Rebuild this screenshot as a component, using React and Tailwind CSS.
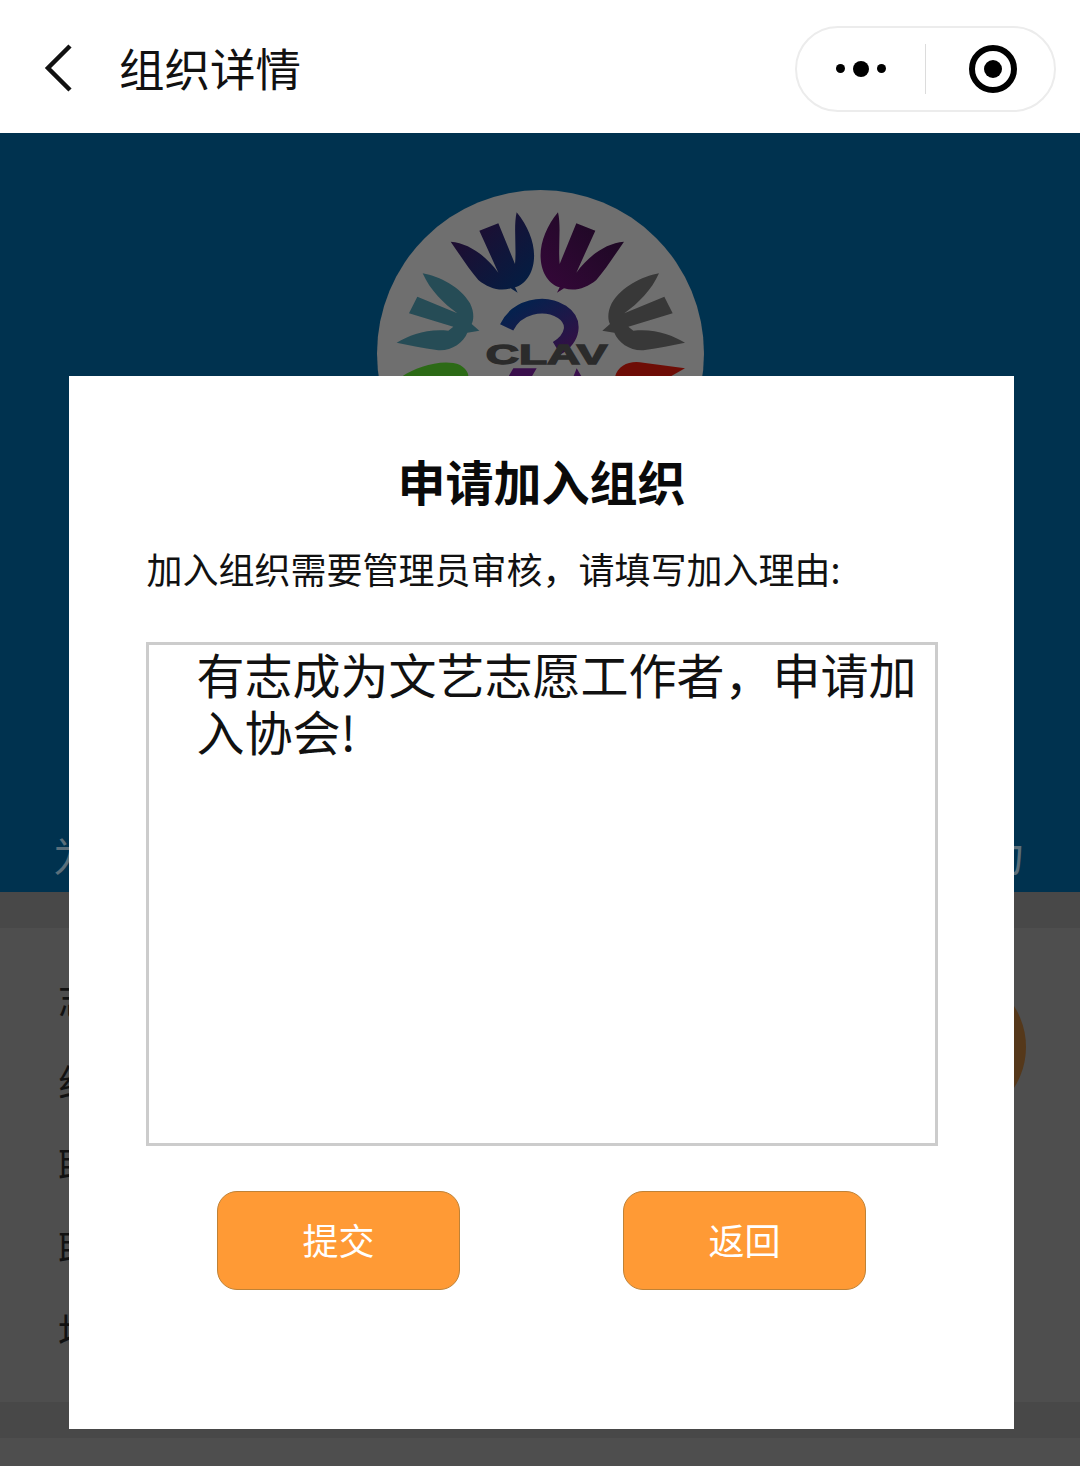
const font = "font-['Noto_Sans_CJK_SC','Noto_Sans',sans-serif]";

function Logo() {
  const bird =
    "M272 185 C330 190 380 230 415 278 L358 152 L415 130 L465 252 C470 200 460 140 470 97 C505 140 525 190 522 235 C520 280 495 315 465 322 L473 338 L452 325 C420 335 385 325 355 300 C325 265 300 225 272 185Z";
  const sideBird =
    "M188 280 C240 290 300 320 330 370 C345 400 340 425 335 432 L358 452 L322 458 C310 490 270 515 230 510 C190 505 150 495 110 488 C150 465 200 445 265 452 L280 440 L147 400 L172 350 L292 400 C250 370 210 330 188 280Z";
  return (
    <svg viewBox="51 30 981 981" className="w-[327px] h-[327px] rounded-full bg-[#6f6f6f]">
      <defs>
        <linearGradient id="blue" x1="0" y1="0" x2="1" y2="1">
          <stop offset="0" stopColor="#26092c" />
          <stop offset="1" stopColor="#001f45" />
        </linearGradient>
        <linearGradient id="purple" x1="0" y1="0" x2="1" y2="1">
          <stop offset="0" stopColor="#18091f" />
          <stop offset="1" stopColor="#36073a" />
        </linearGradient>
        <linearGradient id="hook" x1="0" y1="0" x2="1" y2="1">
          <stop offset="0" stopColor="#00234f" />
          <stop offset="1" stopColor="#331044" />
        </linearGradient>
      </defs>
      <path d={bird} fill="url(#blue)" />
      <path d={bird} fill="url(#purple)" transform="translate(1064 0) scale(-1 1)" />
      <path d={sideBird} fill="#264c56" />
      <path d={sideBird} fill="#383838" transform="translate(1085 0) scale(-1 1)" />
      <path d="M440 442 C470 380 550 362 605 395 C650 425 640 475 590 505" fill="none" stroke="url(#hook)" strokeWidth="44" />
      <text x="560" y="553" textAnchor="middle" fontFamily="Liberation Sans" fontWeight="700" fontSize="84" fill="#2b2b2b" stroke="#2b2b2b" strokeWidth="4" textLength="365" lengthAdjust="spacingAndGlyphs">
        CLAV
      </text>
      <path d="M445 590 L460 565 L530 565 L515 590Z M640 590 L650 565 L665 590Z" fill="#3a0f4c" />
      <path d="M125 590 C170 560 250 535 300 555 C315 565 325 575 325 590Z" fill="#2c6a16" />
      <path d="M765 590 C775 555 810 540 850 548 L975 565 L930 590Z" fill="#6e0d06" />
    </svg>
  );
}

function Row({ label }) {
  return <div className="h-[83px] flex items-center pl-[58px] text-[38px] text-[#111]">{label}</div>;
}

function ModalButton({ children }) {
  return (
    <button className="w-[243px] h-[99px] pb-[3px] rounded-[20px] border border-[#bf8236] bg-[#ff9a35] text-[36px] text-white">
      {children}
    </button>
  );
}

export default function App() {
  return (
    <div className={`relative w-[1080px] h-[1466px] overflow-hidden bg-[#4e4e4e] ${font}`}>
      {/* nav */}
      <div className="h-[133px] bg-white flex items-center justify-between pl-[41px] pr-[24px]">
        <div className="flex items-center gap-[42px]">
          <svg className="mt-[3px]" width="36" height="48" viewBox="0 0 36 48" fill="none" stroke="#111" strokeWidth="4.5">
            <path d="M29 2 L7 24 L29 46" />
          </svg>
          <span className="text-[45.5px] leading-none text-[#111] mt-[2px]">组织详情</span>
        </div>
        <div className="w-[261px] h-[86px] mt-[4px] rounded-full border-2 border-[#ececec] flex items-center">
          <div className="w-[128px] flex justify-center items-center gap-[8px] pr-[1px]">
            <span className="w-[9px] h-[9px] rounded-full bg-black" />
            <span className="w-[16px] h-[16px] rounded-full bg-black" />
            <span className="w-[9px] h-[9px] rounded-full bg-black" />
          </div>
          <div className="w-[1px] h-[50px] bg-[#dcdcdc]" />
          <div className="flex-1 flex justify-center items-center pl-[6px]">
            <div className="w-[48px] h-[48px] rounded-full border-[6px] border-black flex items-center justify-center">
              <span className="w-[18px] h-[18px] rounded-full bg-black" />
            </div>
          </div>
        </div>
      </div>

      {/* hero */}
      <div className="h-[759px] bg-[#00324f] flex flex-col items-center pt-[57px]">
        <Logo />
        <div className="mt-[310px] text-[40.5px] leading-[56px] text-[#5b6f7b] whitespace-nowrap -translate-x-[1px]">
          为促进文艺志愿服务事业的繁荣发展贡献自己的一份力
        </div>
      </div>

      <div className="h-[36px] bg-[#484848]" />

      {/* info card */}
      <div className="relative h-[474px] bg-[#4e4e4e] pt-[28px]">
        <Row label="志愿者人数" />
        <Row label="组织类型" />
        <Row label="联系人" />
        <Row label="联系电话" />
        <Row label="地址" />
        <div className="absolute left-[874px] top-[43px] w-[152px] h-[152px] rounded-full bg-[#55381a]" />
      </div>

      <div className="h-[36px] bg-[#484848]" />

      {/* dialog */}
      <div className="absolute left-[69px] top-[376px] w-[945px] h-[1053px] bg-white flex flex-col items-center pt-[76px]">
        <h2 className="text-[48px] leading-[56px] font-bold text-[#0a0a0a]">申请加入组织</h2>
        <p className="w-[792px] mt-[36px] pl-[1px] text-[36px] leading-[48px] text-[#111]">
          加入组织需要管理员审核，请填写加入理由:
        </p>
        <div className="w-[792px] h-[504px] mt-[50px] border-[3px] border-[#cccccc] pl-[48px] pr-[10px] text-[48px] leading-[57px] text-[#111]">
          有志成为文艺志愿工作者，申请加入协会!
        </div>
        <div className="w-[649px] flex justify-between mt-[45px]">
          <ModalButton>提交</ModalButton>
          <ModalButton>返回</ModalButton>
        </div>
      </div>
    </div>
  );
}
